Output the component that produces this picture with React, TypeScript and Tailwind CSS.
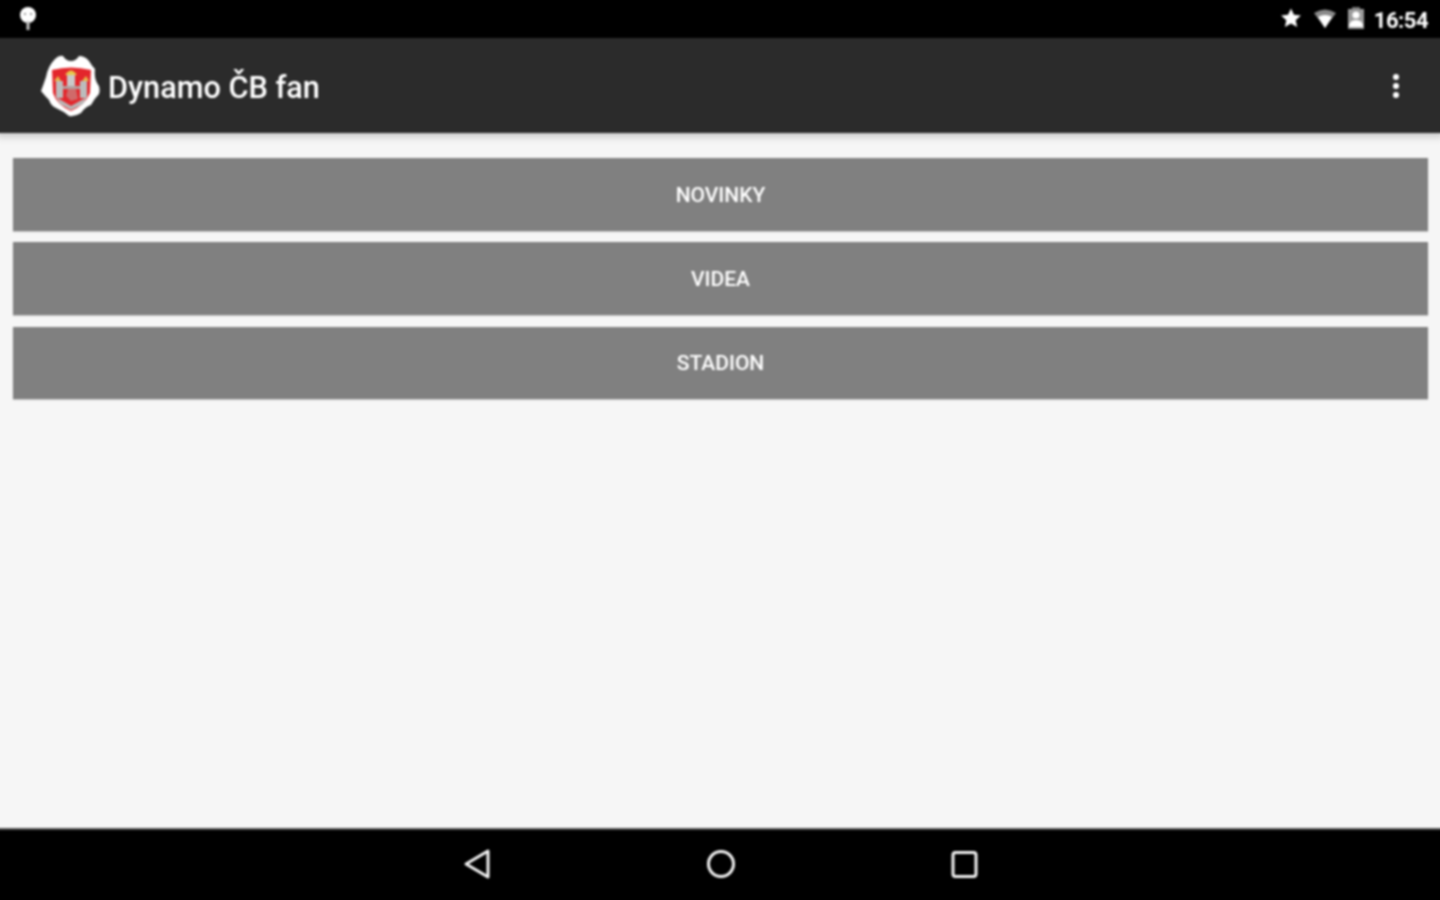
function MenuButton({ label, height }: { label: string; height: string }) {
  return (
    <button className={`flex ${height} items-center justify-center bg-[#808080] pt-[2px] text-[21px] font-medium text-white shadow-[0_1px_1px_rgba(0,0,0,0.18)] [font-family:Roboto,sans-serif]`}>
      {label}
    </button>
  );
}

function Crest() {
  return (
    <svg width="64" height="66" viewBox="0 0 64 66">
      <path
        d="M16 6 Q20 2 24 3 Q27 8 32 8 Q37 8 40 3 Q46 3 50 8 Q53 13 56 16 Q55 24 58 30 Q62 35 60 41 Q55 46 52 52 Q46 54 42 60 Q36 64 30 63 Q24 58 17 55 Q12 53 10 47 Q6 43 2 38 Q5 30 7 24 Q9 13 16 6 Z"
        fill="#ffffff"
      />
      <path d="M13 17 Q32 12 52 17 L51 40 Q46 52 32 58 Q18 52 14 40 Z" fill="#e3262c" />
      <path d="M26 22 Q32 13 38 22 Z" fill="#e8c94a" />
      <path d="M15 28 L19 23 L22 28 Z" fill="#e8b84a" />
      <path d="M43 28 L47 23 L50 28 Z" fill="#e8b84a" />
      <rect x="17" y="28" width="7" height="17" fill="#bcbcbc" />
      <rect x="41" y="28" width="7" height="17" fill="#bcbcbc" />
      <rect x="28" y="22" width="8" height="13" fill="#c9c9c9" />
      <rect x="24" y="33" width="17" height="3" fill="#b0a0a0" />
      <path d="M29 36 H37 L39 46 L32 48 L27 43 Z" fill="#d06a6a" />
      <path d="M17 44 L32 53 L48 44 L44 51 L32 57 L21 51 Z" fill="#b8b8b8" />
    </svg>
  );
}

export default function App() {
  return (
    <div className="h-[900px] w-[1440px] overflow-hidden">
      {/* the screen bleeds 4px past the window so the soft focus does not fade at its edges */}
      <div className="-ml-[4px] -mt-[4px] flex h-[908px] w-[1448px] flex-col bg-[#f6f6f6] blur-[0.9px] [font-family:Roboto,sans-serif]">
        {/* status bar */}
        <div className="flex h-[42px] shrink-0 items-center justify-between bg-black pl-[23px] pr-[16px] pt-[4px]">
          <svg width="18" height="26" viewBox="0 0 18 26">
            <circle cx="9" cy="9" r="8" fill="#ffffff" />
            <circle cx="6" cy="8" r="1" fill="#777777" />
            <circle cx="12" cy="8" r="1" fill="#777777" />
            <rect x="7.5" y="15" width="3" height="9" fill="#c4c4c4" />
          </svg>
          <div className="flex items-center">
            <svg width="22" height="22" viewBox="0 0 24 24" className="mb-[2px] mr-[11px]">
              <path
                d="M12 1.500l3.200 7 7.600.8-5.700 5.100 1.600 7.500L12 18l-6.700 3.900 1.600-7.500L1.200 9.300l7.600-.8z"
                fill="#ffffff"
              />
            </svg>
            <svg width="24" height="20" viewBox="0 0 24 20" className="mr-[10px]">
              <path d="M1 4 Q12 -3 23 4 L12 19 Z" fill="#8a8a8a" />
              <path d="M5 8 Q12 4 19 8 L12 19 Z" fill="#ffffff" />
            </svg>
            <svg width="18" height="22" viewBox="0 0 18 22" className="mb-[2px] mr-[9px]">
              <rect x="5" y="0" width="8" height="3" fill="#777777" />
              <rect x="1" y="2" width="16" height="20" fill="#9a9a9a" />
              <circle cx="9" cy="8" r="3.600" fill="#ffffff" />
              <path d="M2 20 Q2 13 9 13 Q16 13 16 20 Z" fill="#ffffff" />
            </svg>
            <span className="pt-[3px] text-[22px] font-bold leading-none tracking-[-0.5px] text-white">16:54</span>
          </div>
        </div>

        {/* action bar */}
        <div className="z-10 flex h-[95px] shrink-0 items-center justify-between bg-[#2b2b2b] pl-[43px] pr-[45px] shadow-[0_3px_8px_rgba(0,0,0,0.22)]">
          <div className="flex items-center">
            <Crest />
            <span className="ml-[5px] pt-[6px] text-[30.700px] font-medium leading-none text-white">Dynamo ČB fan</span>
          </div>
          <div className="flex flex-col gap-[3px]">
            <span className="h-[6px] w-[6px] rounded-full bg-white" />
            <span className="h-[6px] w-[6px] rounded-full bg-white" />
            <span className="h-[6px] w-[6px] rounded-full bg-white" />
          </div>
        </div>

        {/* buttons */}
        <div className="flex flex-1 flex-col pl-[17px] pr-[16px] pt-[25px]">
          <MenuButton label="NOVINKY" height="h-[73px]" />
          <div className="h-[11px] shrink-0" />
          <MenuButton label="VIDEA" height="h-[73px]" />
          <div className="h-[12px] shrink-0" />
          <MenuButton label="STADION" height="h-[72px]" />
        </div>

        {/* nav bar */}
        <div className="flex h-[76px] shrink-0 items-center justify-center gap-[200px] border-t-2 border-[#555555] bg-black pb-[6px] pl-[1px]">
          <svg width="44" height="40" viewBox="0 0 44 40">
            <path d="M33 7 L11 20 L33 33 Z" fill="none" stroke="#f4f4f4" strokeWidth="3" strokeLinejoin="round" />
          </svg>
          <svg width="44" height="40" viewBox="0 0 44 40">
            <circle cx="22" cy="20" r="12.500" fill="none" stroke="#f4f4f4" strokeWidth="3" />
          </svg>
          <svg width="44" height="40" viewBox="0 0 44 40">
            <rect x="10" y="8.500" width="23" height="24" rx="2.500" fill="none" stroke="#f4f4f4" strokeWidth="3" />
          </svg>
        </div>
      </div>
    </div>
  );
}
